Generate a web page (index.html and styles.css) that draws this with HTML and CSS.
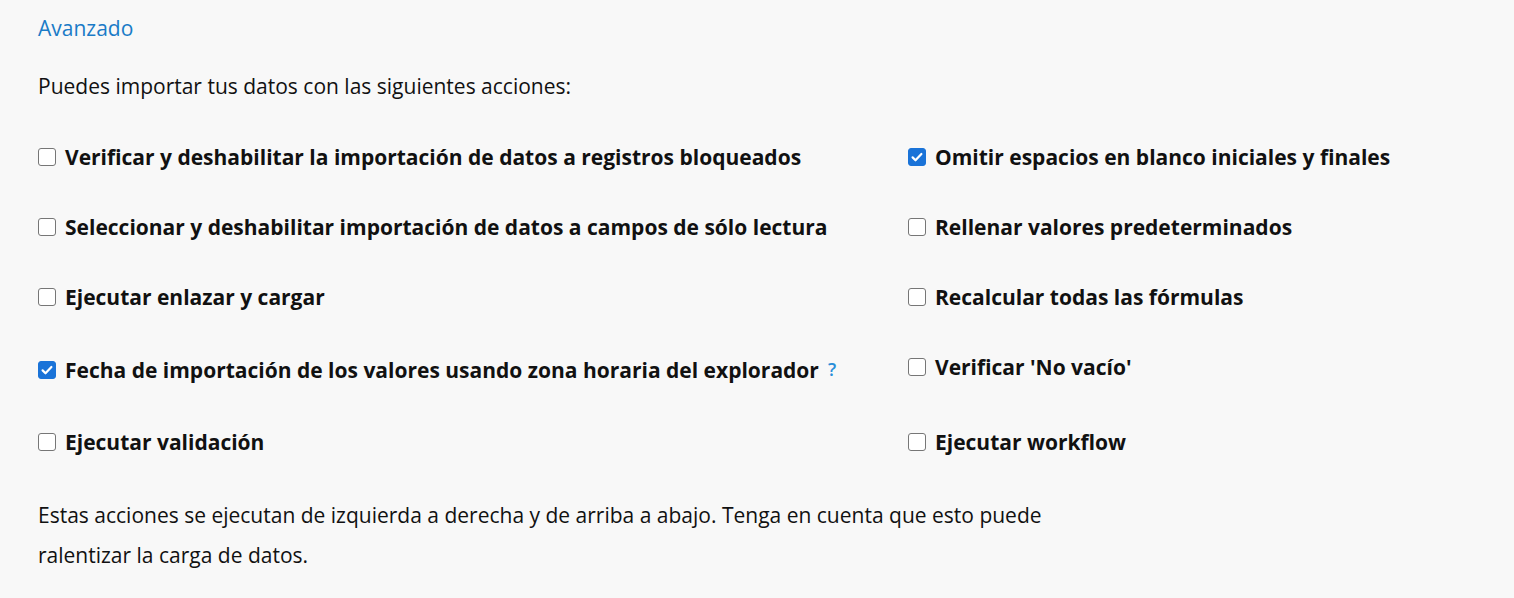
FILE: index.html
```html
<!DOCTYPE html>
<html lang="es">
<head>
<meta charset="utf-8">
<title>Avanzado</title>
<link rel="stylesheet" href="styles.css">
</head>
<body>
<div class="page">
  <div class="title">Avanzado</div>
  <p class="intro">Puedes importar tus datos con las siguientes acciones:</p>
  <div class="grid">
    <label class="opt"><input type="checkbox" class="cb"><span>Verificar y deshabilitar la importación de datos a registros bloqueados</span></label>
    <label class="opt"><input type="checkbox" class="cb" checked><span>Omitir espacios en blanco iniciales y finales</span></label>
    <label class="opt"><input type="checkbox" class="cb"><span>Seleccionar y deshabilitar importación de datos a campos de sólo lectura</span></label>
    <label class="opt"><input type="checkbox" class="cb"><span>Rellenar valores predeterminados</span></label>
    <label class="opt"><input type="checkbox" class="cb"><span>Ejecutar enlazar y cargar</span></label>
    <label class="opt"><input type="checkbox" class="cb"><span>Recalcular todas las fórmulas</span></label>
    <label class="opt"><input type="checkbox" class="cb" checked><span>Fecha de importación de los valores usando zona horaria del explorador</span><span class="help">?</span></label>
    <label class="opt"><input type="checkbox" class="cb"><span>Verificar 'No vacío'</span></label>
    <label class="opt"><input type="checkbox" class="cb"><span>Ejecutar validación</span></label>
    <label class="opt"><input type="checkbox" class="cb"><span>Ejecutar workflow</span></label>
  </div>
  <p class="note">Estas acciones se ejecutan de izquierda a derecha y de arriba a abajo. Tenga en cuenta que esto puede<br>ralentizar la carga de datos.</p>
</div>
</body>
</html>
```

FILE: styles.css
```css
html, body {
  margin: 0;
  padding: 0;
  background: #f8f8f8;
}
body {
  font-family: "Open Sans", "Liberation Sans", sans-serif;
  color: #111;
}
.page {
  padding: 14px 38px 0 38px;
}
.title {
  font-size: 21px;
  line-height: 28px;
  color: #1a7bc7;
}
.intro {
  margin: 30px 0 0 0;
  font-size: 21px;
  line-height: 28px;
}
.grid {
  display: grid;
  grid-template-columns: 870px 1fr;
  row-gap: 42px;
  align-items: start;
  margin-top: 43px;
}
.opt {
  display: flex;
  align-items: center;
  gap: 9px;
  font-size: 21px;
  font-weight: 700;
  line-height: 28px;
  color: #111;
}
.cb {
  appearance: none;
  -webkit-appearance: none;
  margin: 0;
  width: 18px;
  height: 18px;
  border: 1.5px solid #767676;
  border-radius: 3px;
  background: #fff;
  flex: none;
  box-sizing: border-box;
}
.cb:checked {
  border-color: #1a73d8;
  background: #1a73d8 url("data:image/svg+xml,%3Csvg xmlns='http://www.w3.org/2000/svg' viewBox='0 0 16 16'%3E%3Cpath d='M3.6 8.4l2.9 2.9 5.9-6.3' fill='none' stroke='%23fff' stroke-width='2.2' stroke-linecap='round' stroke-linejoin='round'/%3E%3C/svg%3E") center/100% no-repeat;
}
.help {
  margin-left: 0;
  font-size: 18px;
  font-weight: 600;
  line-height: 33px;
  color: #2a8ed8;
}
.note {
  margin: 39px 0 0 0;
  font-size: 21px;
  line-height: 40px;
}
```
